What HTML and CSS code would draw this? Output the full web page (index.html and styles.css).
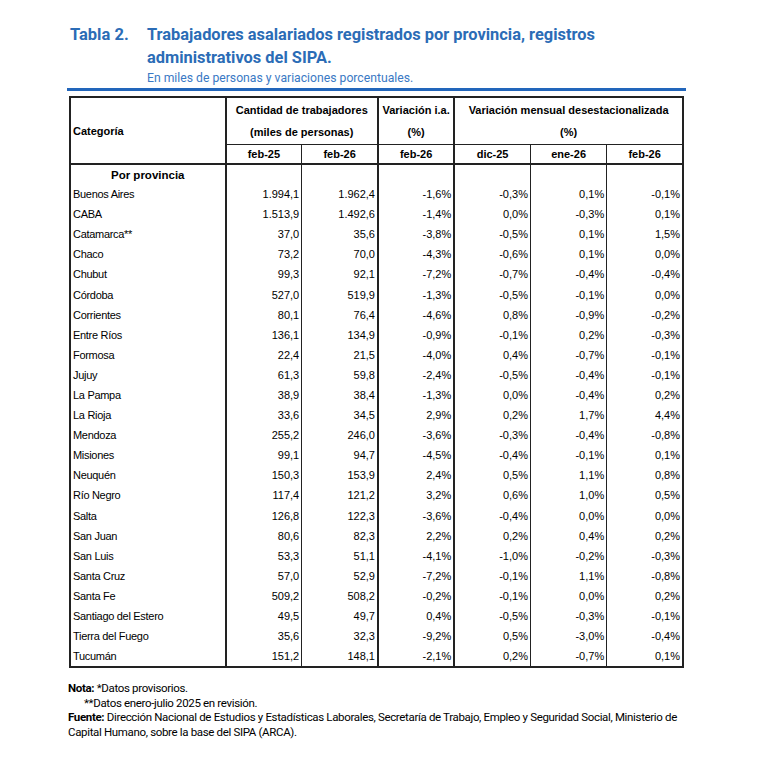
FILE: index.html
```html
<!DOCTYPE html>
<html lang="es">
<head>
  <meta charset="UTF-8">
  <title>Tabla 2 - Trabajadores asalariados registrados por provincia</title>
  <link rel="stylesheet" href="styles.css">
</head>
<body>

  <div class="page">
    <!-- Titulo -->
    <div class="title-block">
      <div class="title-num">Tabla 2.</div>
      <div class="title-text">
        <h1>Trabajadores asalariados registrados por provincia, registros administrativos del SIPA.</h1>
        <p class="subtitle">En miles de personas y variaciones porcentuales.</p>
      </div>
    </div>
    <div class="blue-rule"></div>

    <!-- Tabla -->
    <table class="data">
      <colgroup>
        <col class="c-cat">
        <col class="c-num">
        <col class="c-num">
        <col class="c-num">
        <col class="c-num">
        <col class="c-num">
        <col class="c-num">
      </colgroup>
      <thead>
        <tr class="head-top">
          <th rowspan="2" class="cat-head">Categoría</th>
          <th colspan="2" class="sep">Cantidad de trabajadores<br>(miles de personas)</th>
          <th class="sep">Variación i.a.<br>(%)</th>
          <th colspan="3" class="wide">Variación mensual desestacionalizada<br>(%)</th>
        </tr>
        <tr class="head-sub">
          <th>feb-25</th>
          <th class="sep">feb-26</th>
          <th class="sep">feb-26</th>
          <th>dic-25</th>
          <th>ene-26</th>
          <th>feb-26</th>
        </tr>
      </thead>
      <tbody id="rows">
        <tr class="group">
          <td class="group-name">Por provincia</td>
          <td></td><td class="sep"></td><td class="sep"></td><td></td><td></td><td></td>
        </tr>
      </tbody>
    </table>

    <!-- Notas -->
    <div class="notes">
      <p><b>Nota:</b> *Datos provisorios.</p>
      <p class="indent">**Datos enero-julio 2025 en revisión.</p>
      <p><b>Fuente:</b> Dirección Nacional de Estudios y Estadísticas Laborales, Secretaría de Trabajo, Empleo y Seguridad Social, Ministerio de Capital Humano, sobre la base del SIPA (ARCA).</p>
    </div>
  </div>

  <script>
    const data = [
      ['Buenos Aires', '1.994,1', '1.962,4', '-1,6%', '-0,3%', '0,1%', '-0,1%'],
      ['CABA', '1.513,9', '1.492,6', '-1,4%', '0,0%', '-0,3%', '0,1%'],
      ['Catamarca**', '37,0', '35,6', '-3,8%', '-0,5%', '0,1%', '1,5%'],
      ['Chaco', '73,2', '70,0', '-4,3%', '-0,6%', '0,1%', '0,0%'],
      ['Chubut', '99,3', '92,1', '-7,2%', '-0,7%', '-0,4%', '-0,4%'],
      ['Córdoba', '527,0', '519,9', '-1,3%', '-0,5%', '-0,1%', '0,0%'],
      ['Corrientes', '80,1', '76,4', '-4,6%', '0,8%', '-0,9%', '-0,2%'],
      ['Entre Ríos', '136,1', '134,9', '-0,9%', '-0,1%', '0,2%', '-0,3%'],
      ['Formosa', '22,4', '21,5', '-4,0%', '0,4%', '-0,7%', '-0,1%'],
      ['Jujuy', '61,3', '59,8', '-2,4%', '-0,5%', '-0,4%', '-0,1%'],
      ['La Pampa', '38,9', '38,4', '-1,3%', '0,0%', '-0,4%', '0,2%'],
      ['La Rioja', '33,6', '34,5', '2,9%', '0,2%', '1,7%', '4,4%'],
      ['Mendoza', '255,2', '246,0', '-3,6%', '-0,3%', '-0,4%', '-0,8%'],
      ['Misiones', '99,1', '94,7', '-4,5%', '-0,4%', '-0,1%', '0,1%'],
      ['Neuquén', '150,3', '153,9', '2,4%', '0,5%', '1,1%', '0,8%'],
      ['Río Negro', '117,4', '121,2', '3,2%', '0,6%', '1,0%', '0,5%'],
      ['Salta', '126,8', '122,3', '-3,6%', '-0,4%', '0,0%', '0,0%'],
      ['San Juan', '80,6', '82,3', '2,2%', '0,2%', '0,4%', '0,2%'],
      ['San Luis', '53,3', '51,1', '-4,1%', '-1,0%', '-0,2%', '-0,3%'],
      ['Santa Cruz', '57,0', '52,9', '-7,2%', '-0,1%', '1,1%', '-0,8%'],
      ['Santa Fe', '509,2', '508,2', '-0,2%', '-0,1%', '0,0%', '0,2%'],
      ['Santiago del Estero', '49,5', '49,7', '0,4%', '-0,5%', '-0,3%', '-0,1%'],
      ['Tierra del Fuego', '35,6', '32,3', '-9,2%', '0,5%', '-3,0%', '-0,4%'],
      ['Tucumán', '151,2', '148,1', '-2,1%', '0,2%', '-0,7%', '0,1%']
    ];

    const tbody = document.getElementById('rows');
    data.forEach(row => {
      const tr = document.createElement('tr');
      tr.innerHTML = row.map((val, i) => {
        if (i === 0) return `<td class="name">${val}</td>`;
        const cls = (i === 2 || i === 3) ? 'num sep' : 'num';
        return `<td class="${cls}">${val}</td>`;
      }).join('');
      tbody.appendChild(tr);
    });
  </script>
</body>
</html>
```

FILE: styles.css
```css
body {
  margin: 0;
  background: #fff;
  color: #000;
  font-family: 'Liberation Sans', Arial, sans-serif;
}
.page {
  width: 620px;
  padding: 23px 0 0 68px;
}
.title-block {
  display: flex;
  color: #2b6cb6;
  font-family: Roboto, 'Noto Sans', sans-serif;
}
.title-num {
  width: 77px;
  flex-shrink: 0;
  font-size: 16.5px;
  font-weight: bold;
  line-height: 23px;
  padding-left: 2px;
}
.title-text h1 {
  margin: 0;
  font-size: 16.4px;
  font-weight: bold;
  line-height: 23px;
}
.subtitle {
  margin: 2px 0 0;
  font-size: 12.2px;
  line-height: 14px;
  color: #3a79c4;
}
.blue-rule {
  height: 3px;
  background: #2266bb;
  margin-top: 3px;
  width: 619px;
  margin-left: -1px;
}
.data {
  border-collapse: collapse;
  table-layout: fixed;
  width: 615px;
  margin: 5px 0 0 1px;
  border: 2px solid #222;
  font-size: 11px;
}
.c-cat { width: 155px; }
.c-num { width: 76px; }
.data th {
  font-weight: bold;
  text-align: center;
  padding: 0;
  border-left: 1px solid #222;
}
.head-top th {
  height: 46px;
  line-height: 22px;
  border-bottom: 1px solid #222;
}
.head-sub th {
  height: 18px;
  line-height: 18px;
  border-bottom: 2px solid #222;
}
.data th.cat-head {
  text-align: left;
  padding-left: 2px;
  border-left: none;
  border-right: 2px solid #222;
  border-bottom: 2px solid #222;
}
.data .sep {
  border-right: 2px solid #222;
}
.data td {
  height: 20.1px;
  padding: 0 2px;
  border-left: 1px solid #222;
  white-space: nowrap;
}
.data tr.group td {
  height: 19px;
}
.data td.name {
  border-left: none;
  border-right: 2px solid #222;
  letter-spacing: -0.3px;
}
.data td.group-name {
  border-left: none;
  border-right: 2px solid #222;
  text-align: center;
  font-weight: bold;
  font-size: 11.5px;
}
.num {
  text-align: right;
}
.notes {
  margin-top: 13px;
  font-family: Roboto, 'Noto Sans', sans-serif;
  font-size: 11.5px;
  line-height: 14.6px;
  letter-spacing: -0.34px;
  width: 620px;
}
.notes p {
  margin: 0;
}
.notes .indent {
  padding-left: 16px;
}
```
